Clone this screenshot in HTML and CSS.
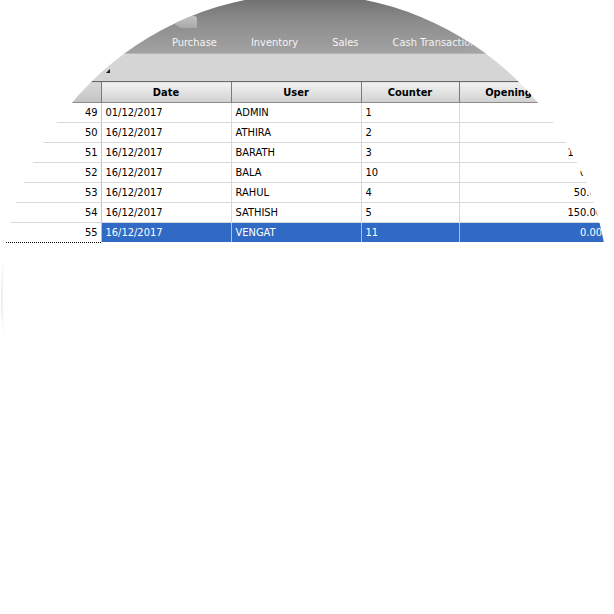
FILE: index.html
```html
<!DOCTYPE html>
<html>
<head>
<meta charset="utf-8">
<link rel="stylesheet" href="styles.css">
</head>
<body>
<div class="app">
  <div class="menubar">
    <span class="notch"></span>
    <span class="menu-item">Purchase</span>
    <span class="menu-item">Inventory</span>
    <span class="menu-item">Sales</span>
    <span class="menu-item">Cash Transactions</span>
  </div>
  <div class="toolbar"><span class="mark"></span></div>
  <table class="grid">
    <colgroup>
      <col class="c-rh"><col class="c-date"><col class="c-user"><col class="c-counter"><col class="c-open">
    </colgroup>
    <thead>
      <tr><th class="rh"></th><th>Date</th><th>User</th><th>Counter</th><th>Opening Balance</th></tr>
    </thead>
    <tbody>
      <tr><td class="rh">49</td><td>01/12/2017</td><td>ADMIN</td><td>1</td><td class="num">1000.00</td></tr>
      <tr><td class="rh">50</td><td>16/12/2017</td><td>ATHIRA</td><td>2</td><td class="num">500.00</td></tr>
      <tr><td class="rh">51</td><td>16/12/2017</td><td>BARATH</td><td>3</td><td class="num">100.00</td></tr>
      <tr><td class="rh">52</td><td>16/12/2017</td><td>BALA</td><td>10</td><td class="num">0.00</td></tr>
      <tr><td class="rh">53</td><td>16/12/2017</td><td>RAHUL</td><td>4</td><td class="num">50.00</td></tr>
      <tr><td class="rh">54</td><td>16/12/2017</td><td>SATHISH</td><td>5</td><td class="num">150.00</td></tr>
      <tr class="sel"><td class="rh">55</td><td>16/12/2017</td><td>VENGAT</td><td>11</td><td class="num">0.00</td></tr>
    </tbody>
  </table>
</div>
</body>
</html>
```

FILE: styles.css
```css
html, body {
  margin: 0;
  padding: 0;
  background: #ffffff;
}

.app {
  width: 614px;
  height: 614px;
  background: linear-gradient(to right, #d6d6d6 0, #f0f0f0 2px, #ffffff 4px);
  overflow: hidden;
  clip-path: circle(304px at 305px 298px);
  font-family: "DejaVu Sans Condensed", "DejaVu Sans", sans-serif;
  font-stretch: condensed;
}

.menubar {
  position: relative;
  height: 54px;
  box-sizing: border-box;
  background: linear-gradient(#727272, #8c8c8c 40%, #a2a2a2);
  display: flex;
  align-items: flex-end;
  gap: 34px;
  padding: 0 0 3px 172px;
  border-bottom: 1px solid #b4b4b4;
}

.menubar::after {
  content: "";
  position: absolute;
  top: 0;
  bottom: 0;
  left: 462px;
  width: 160px;
  background: linear-gradient(to right, rgba(168, 168, 168, 0), #a8a8a8 28px, #b2b2b2);
}

.notch {
  position: absolute;
  left: 172px;
  top: 16px;
  width: 25px;
  height: 12px;
  background: linear-gradient(#c2c2c2, #a8a8a8);
  border-radius: 0 3px 0 12px;
}

.menu-item {
  color: #f4f4f4;
  font-size: 11px;
  line-height: 14px;
  white-space: nowrap;
}

.toolbar {
  height: 27px;
  background: #d5d5d5;
  display: flex;
  align-items: flex-start;
}

.mark {
  width: 0;
  height: 0;
  margin: 15px 0 0 106px;
  border-left: 4px solid transparent;
  border-bottom: 4px solid #1a1a1a;
}

.grid {
  border-collapse: collapse;
  table-layout: fixed;
  width: 605px;
  font-size: 11px;
  color: #000;
}

.c-rh { width: 101px; }
.c-date { width: 130px; }
.c-user { width: 130px; }
.c-counter { width: 98px; }
.c-open { width: 146px; }

.grid th {
  height: 20px;
  padding: 0;
  font-weight: bold;
  text-align: center;
  white-space: nowrap;
  overflow: hidden;
  background: linear-gradient(#f2f2f2, #e2e2e2 50%, #cfcfcf);
  border-top: 1px solid #6a6a6a;
  border-bottom: 1px solid #8a8a8a;
  border-left: 1px solid #7a7a7a;
}

.grid th.rh {
  border-left: none;
  background: linear-gradient(#d8d8d8, #c4c4c4);
}

.grid td {
  height: 19px;
  padding: 0 0 0 4px;
  white-space: nowrap;
  overflow: hidden;
  border-bottom: 1px solid #d8d8d8;
  border-left: 1px solid #d8d8d8;
  background: #ffffff;
}

.grid td.rh {
  border-left: none;
  border-right: 1px solid #c4c4c4;
  text-align: right;
  padding: 0 3px 0 0;
}

.grid td.num {
  text-align: right;
  padding: 0 3px 0 0;
}

.grid tr.sel td {
  background: #316ac5;
  color: #ffffff;
  border-left-color: #a9bfe6;
  border-bottom-color: #ffffff;
}

.grid tr.sel td.rh {
  background: #ffffff;
  color: #000000;
  border-bottom: 1px dotted #000000;
  border-right: 1px dotted #000000;
}
```
